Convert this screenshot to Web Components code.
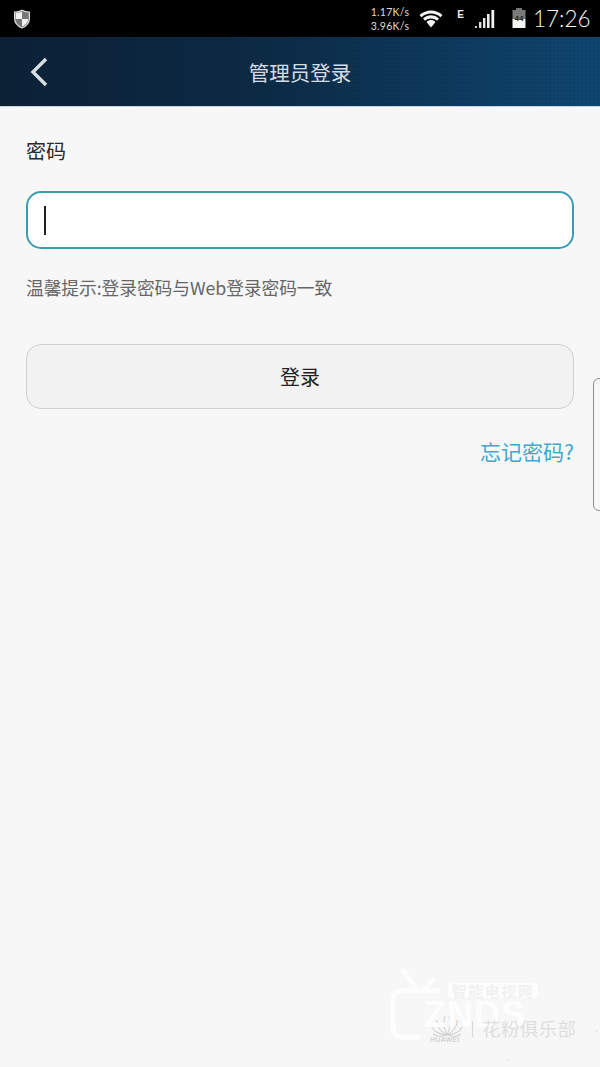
<!DOCTYPE html>
<html lang="zh">
<head>
<meta charset="utf-8">
<title>管理员登录</title>
<style>
html, body { margin: 0; padding: 0; }
body {
    width: 600px;
    height: 1067px;
    overflow: hidden;
    position: relative;
    background: #f7f7f7;
    font-family: "Noto Sans CJK SC", "Noto Sans", sans-serif;
}
</style>
</head>
<body>
<status-bar></status-bar>
<app-header>管理员登录</app-header>
<login-form></login-form>
<side-handle></side-handle>
<water-mark></water-mark>

<script>
(() => {
    const define = (name, html) => {
        customElements.define(name, class extends HTMLElement {
            constructor() {
                super();
                this.attachShadow({ mode: 'open' }).innerHTML = html;
            }
        });
    };

    define('status-bar', `
        <style>
        :host {
            display: flex;
            align-items: center;
            box-sizing: border-box;
            height: 37px;
            padding: 0 10px 0 13px;
            background: #000;
            color: #eee;
            font-family: "Lato", "Liberation Sans", sans-serif;
        }
        svg { display: block; flex: none; }
        #speed {
            margin-left: auto;
            font-size: 10.5px;
            line-height: 14px;
            letter-spacing: .3px;
            text-align: left;
            color: #ddd;
        }
        #wifi { margin-left: 10px; }
        #e {
            margin: -9px 0 0 14px;
            font: bold 10px "Liberation Sans", sans-serif;
        }
        #signal { margin-left: 11px; }
        #battery { margin-left: 17px; }
        #time {
            margin-left: 7px;
            width: 57px;
            font-size: 22.5px;
            font-weight: 300;
            white-space: nowrap;
            color: #f4f4f4;
        }
        </style>
        <svg width="18" height="20" viewBox="0 0 18 20">
            <path d="M9 1.2 C6.5 2.6 4 3 1.6 3 L1.6 9.5 C1.6 14 4.5 17 9 19 C13.5 17 16.4 14 16.4 9.5 L16.4 3 C14 3 11.5 2.6 9 1.2Z" fill="#777" stroke="#ddd" stroke-width="1.2"/>
            <path d="M9 2.6 L9 10 L2.8 10 L2.8 4.1 C5 4 7 3.6 9 2.6Z" fill="#f2f2f2"/>
            <path d="M9 10 L15.2 10 C15 13.6 12.6 16 9 17.6Z" fill="#f2f2f2"/>
        </svg>
        <div id="speed"><div>1.17K/s</div><div>3.96K/s</div></div>
        <svg id="wifi" width="24" height="19" viewBox="0 0 24 19">
            <path d="M0.5 6 C7 0 17 0 23.5 6 L21.5 8.2 C16 3.2 8 3.2 2.5 8.2Z" fill="#f2f2f2"/>
            <path d="M4 9.6 C9 5.2 15 5.2 20 9.6 L18 11.8 C14.2 8.6 9.8 8.6 6 11.8Z" fill="#f2f2f2"/>
            <path d="M7.5 13 C10.5 10.4 13.5 10.4 16.5 13 L12 18.5Z" fill="#f2f2f2"/>
        </svg>
        <span id="e">E</span>
        <svg id="signal" width="20" height="20" viewBox="0 0 20 20">
            <rect x="0" y="17" width="2" height="2" fill="#ccc"/>
            <rect x="4" y="13" width="2.4" height="6" fill="#ddd"/>
            <rect x="8" y="9" width="2.4" height="10" fill="#e6e6e6"/>
            <rect x="12" y="5" width="2.6" height="14" fill="#eee"/>
            <rect x="16.4" y="1" width="2.8" height="18" fill="#f2f2f2"/>
        </svg>
        <svg id="battery" width="14" height="21" viewBox="0 0 14 21">
            <rect x="4" y="0" width="6" height="2" fill="#777"/>
            <rect x="0.5" y="2" width="13" height="9" fill="#7a7a7a"/>
            <rect x="0.5" y="11" width="13" height="9" fill="#f4f4f4"/>
            <text x="7" y="13" text-anchor="middle" font-family="Liberation Sans, sans-serif" font-size="8" font-weight="bold" fill="#222">44</text>
        </svg>
        <span id="time">17:26</span>
    `);

    define('app-header', `
        <style>
        :host {
            display: flex;
            align-items: center;
            justify-content: center;
            position: relative;
            box-sizing: border-box;
            height: 70px;
            color: #d3dde5;
            font-size: 20.5px;
            background-color: #0b2a47;
            background-image:
                radial-gradient(rgba(0,0,0,.07) 1px, transparent 1.2px),
                linear-gradient(90deg, #0c2136 0%, #0c2b47 45%, #0f4670 100%);
            background-size: 4px 4px, 100% 100%;
            border-bottom: 1px solid #c9d4da;
        }
        svg { position: absolute; left: 30px; top: 20px; }
        </style>
        <svg width="20" height="30" viewBox="0 0 20 30">
            <path d="M16 2 L3 15 L16 28" fill="none" stroke="#d8dfe4" stroke-width="3.4"/>
        </svg>
        <slot></slot>
    `);

    define('text-field', `
        <style>
        :host {
            display: flex;
            align-items: center;
            box-sizing: border-box;
            height: 58px;
            padding-left: 16px;
            background: #fff;
            border: 2px solid #3a9fb4;
            border-radius: 15px;
        }
        #caret { width: 2px; height: 29px; background: #222; }
        </style>
        <div id="caret"></div>
    `);

    define('flat-button', `
        <style>
        :host {
            display: flex;
            align-items: center;
            justify-content: center;
            box-sizing: border-box;
            height: 65px;
            background: #f2f2f2;
            border: 1px solid #cfcfcf;
            border-radius: 15px;
            color: #222;
            font-size: 20px;
        }
        </style>
        <slot></slot>
    `);

    define('login-form', `
        <style>
        :host {
            display: flex;
            flex-direction: column;
            padding: 29px 26px 0;
        }
        #label { font-size: 20px; line-height: 30px; color: #2a2a2a; }
        text-field { margin-top: 25px; }
        #hint {
            margin-top: 24px;
            font-size: 17.8px;
            line-height: 28px;
            letter-spacing: -.1px;
            color: #666;
            white-space: nowrap;
        }
        flat-button { margin-top: 43px; }
        #forgot {
            align-self: flex-end;
            margin-top: 27px;
            font-size: 21px;
            line-height: 30px;
            color: #3fa7cf;
        }
        </style>
        <div id="label">密码</div>
        <text-field></text-field>
        <div id="hint">温馨提示:登录密码与Web登录密码一致</div>
        <flat-button>登录</flat-button>
        <div id="forgot">忘记密码?</div>
    `);

    // edge tab floating over the page at the right side
    define('side-handle', `
        <style>
        :host {
            position: absolute;
            left: 593px;
            top: 378px;
            box-sizing: border-box;
            width: 12px;
            height: 133px;
            border: 1px solid #8d8d8d;
            border-radius: 10px;
        }
        </style>
    `);

    // faint site marks stamped over the bottom right corner
    define('water-mark', `
        <style>
        :host {
            position: absolute;
            left: 390px;
            top: 965px;
            width: 210px;
            height: 100px;
            color: #fff;
        }
        svg { position: absolute; left: 0; top: 0; }
        #site {
            position: absolute;
            left: 58px;
            top: 18px;
            width: 90px;
            height: 15px;
            font-size: 15px;
            line-height: 15px;
            font-weight: bold;
            letter-spacing: 1.5px;
            text-align: center;
            white-space: nowrap;
            color: #f1f1f1;
            background: #fdfdfd;
            border-radius: 4px;
        }
        #zn {
            position: absolute;
            left: 34px;
            top: 36px;
            font: bold 36px/28px "Liberation Sans", sans-serif;
            letter-spacing: 1px;
            color: #fdfdfd;
        }
        #club {
            position: absolute;
            left: 92px;
            top: 53px;
            font-size: 18.5px;
            line-height: 20px;
            letter-spacing: .4px;
            color: #dedede;
        }
        #bar {
            position: absolute;
            left: 82px;
            top: 56px;
            width: 1px;
            height: 16px;
            background: #d8d8d8;
        }
        #brand {
            position: absolute;
            left: 40px;
            top: 71px;
            font: 7px "Liberation Sans", sans-serif;
            letter-spacing: .4px;
            color: #c4c4c4;
        }
        </style>
        <svg width="210" height="100" viewBox="0 0 210 100">
            <path d="M11 26 H50 M11 26 Q3 26 3 34 V62 Q3 72 13 72 H30 M12 4 L26 24 M44 14 L34 24" fill="none" stroke="#fdfdfd" stroke-width="5"/>
            <g fill="none" stroke="#d2d2d2" stroke-width="1.1" transform="translate(57 48)">
                <path d="M0 22 Q-5 12 -2 3 M0 22 Q5 12 2 3 M0 22 Q-11 16 -10 7 M0 22 Q11 16 10 7 M0 22 Q-12 21 -15 14 M0 22 Q12 21 15 14 M0 22 Q-9 25 -14 21 M0 22 Q9 25 14 21"/>
            </g>
            <path d="M206 65 l1 2 M117 95 h2" stroke="#d8d8d8" stroke-width="1"/>
        </svg>
        <div id="site">智能电视网</div>
        <div id="zn">ZNDS</div>
        <div id="bar"></div>
        <div id="club">花粉俱乐部</div>
        <div id="brand">HUAWEI</div>
    `);
})();
</script>
</body>
</html>
